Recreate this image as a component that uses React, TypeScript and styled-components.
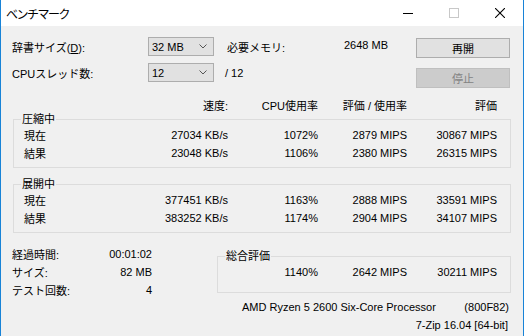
import React from "react";
import styled, { createGlobalStyle } from "styled-components";

const GlobalStyle = createGlobalStyle`
    html, body {
        margin: 0;
        padding: 0;
        background: #f0f0f0;
    }
    body {
        font-family: "Liberation Sans", "Noto Sans CJK JP", sans-serif;
        font-size: 11px;
        color: #000;
    }
`

const Window = styled.div`
    width: 524px;
    height: 336px;
    box-sizing: border-box;
    border-left: 1px solid #1883d7;
    border-right: 1px solid #1883d7;
    background: #f0f0f0;
    overflow: hidden;
    display: flex;
    flex-direction: column;
`

const TitleBar = styled.div`
    height: 26px;
    flex: none;
    background: #fff;
    display: flex;
    align-items: center;
`

const Title = styled.span`
    flex: 1;
    padding-left: 5px;
    font-family: "Noto Sans CJK JP", sans-serif;
    font-size: 12px;
    letter-spacing: -1.5px;
`

const TitleButton = styled.div<{ $disabled?: boolean }>`
    width: 46px;
    height: 26px;
    display: flex;
    align-items: center;
    justify-content: center;
    color: ${({ $disabled }) => $disabled ? "#c8c8c8" : "#000"};
`

const Body = styled.div`
    flex: 1;
    padding: 11px 12px 0 11px;
    display: flex;
    flex-direction: column;
`

const TopSection = styled.div`
    display: flex;
    align-items: flex-start;
`

const SettingsGrid = styled.div`
    display: grid;
    grid-template-columns: 136px 66px 174px;
    grid-auto-rows: 19px;
    row-gap: 7px;
    align-items: center;
`

const Select = styled.div`
    height: 19px;
    box-sizing: border-box;
    border: 1px solid #adadad;
    background: #e1e1e1;
    padding: 0 6px 0 3px;
    display: flex;
    align-items: center;
    justify-content: space-between;
`

const InfoCell = styled.div<{ $indent: number }>`
    padding-left: ${({ $indent }) => $indent}px;
    display: flex;
    justify-content: space-between;
`

const ButtonColumn = styled.div`
    width: 94px;
    margin: 1px 0 0 28px;
    display: flex;
    flex-direction: column;
    gap: 10px;
`

const Button = styled.div<{ disabled?: boolean }>`
    height: 20px;
    box-sizing: border-box;
    border: 1px solid ${({ disabled }) => disabled ? "#bfbfbf" : "#adadad"};
    background: ${({ disabled }) => disabled ? "#cccccc" : "#e1e1e1"};
    color: ${({ disabled }) => disabled ? "#838383" : "#000"};
    display: flex;
    align-items: center;
    justify-content: center;
`

const HeaderRow = styled.div`
    margin-top: 9px;
    height: 14px;
    padding-right: 14px;
    display: grid;
    grid-template-columns: 1fr 90px 89px 90px;
    align-items: center;
    text-align: right;
`

const Group = styled.fieldset<{ $bottom: number }>`
    margin: 0 0 0 1px;
    padding: 0 0 ${({ $bottom }) => $bottom}px 0;
    border: 1px solid #dcdcdc;
    min-width: 0;
`

const Legend = styled.legend`
    margin-left: 7px;
    padding: 0 1px;
    line-height: 14px;
    height: 14px;
`

const TableRow = styled.div`
    height: 18px;
    padding: 0 13px 0 10px;
    display: grid;
    grid-template-columns: auto 1fr 90px 89px 90px;
    align-items: center;
    text-align: right;
`

const RowLabel = styled.span`
    text-align: left;
`

const Spacer = styled.div<{ $h: number }>`
    height: ${({ $h }) => $h}px;
    flex: none;
`

const BottomSection = styled.div`
    display: flex;
    align-items: flex-start;
`

const StatsGrid = styled.div`
    width: 141px;
    display: grid;
    grid-template-columns: 1fr auto;
    grid-auto-rows: 18px;
    align-items: center;
`

const StatValue = styled.span`
    justify-self: end;
`

const SummaryWrap = styled.div`
    flex: 1;
    margin: 4px 0 0 64px;
    display: flex;
    flex-direction: column;
`

const CpuLine = styled.div`
    margin-top: 1px;
    height: 14px;
    padding: 0 2px 0 230px;
    display: flex;
    align-items: center;
    justify-content: space-between;
`

const VersionLine = styled.div`
    margin-top: 5px;
    height: 14px;
    padding-right: 3px;
    text-align: right;
`

const Chevron = () => (
    <svg width="8" height="5" viewBox="0 0 8 5">
        <polyline points="0.5,0.5 4,4 7.5,0.5" fill="none" stroke="#555" strokeWidth="1" />
    </svg>
)

const rows = {
    compress: [
        ["現在", "27034 KB/s", "1072%", "2879 MIPS", "30867 MIPS"],
        ["結果", "23048 KB/s", "1106%", "2380 MIPS", "26315 MIPS"],
    ],
    decompress: [
        ["現在", "377451 KB/s", "1163%", "2888 MIPS", "33591 MIPS"],
        ["結果", "383252 KB/s", "1174%", "2904 MIPS", "34107 MIPS"],
    ],
}

const stats = [
    ["経過時間:", "00:01:02"],
    ["サイズ:", "82 MB"],
    ["テスト回数:", "4"],
]

const ResultGroup = ({ title, data }: { title: string, data: string[][] }) => (
    <Group $bottom={5}>
        <Legend>{title}</Legend>
        {data.map(row => (
            <TableRow key={row[0]}>
                <RowLabel>{row[0]}</RowLabel>
                {row.slice(1).map((v, i) => <span key={i}>{v}</span>)}
            </TableRow>
        ))}
    </Group>
)

const App = () => {
    return (
        <Window>
            <GlobalStyle />
            <TitleBar>
                <Title>ベンチマーク</Title>
                <TitleButton>
                    <svg width="10" height="10" viewBox="0 0 10 10">
                        <line x1="0" y1="5.5" x2="10" y2="5.5" stroke="currentColor" />
                    </svg>
                </TitleButton>
                <TitleButton $disabled>
                    <svg width="10" height="10" viewBox="0 0 10 10">
                        <rect x="0.5" y="0.5" width="9" height="9" fill="none" stroke="currentColor" />
                    </svg>
                </TitleButton>
                <TitleButton>
                    <svg width="10" height="10" viewBox="0 0 10 10">
                        <path d="M0 0 L10 10 M10 0 L0 10" stroke="currentColor" strokeWidth="1.1" />
                    </svg>
                </TitleButton>
            </TitleBar>
            <Body>
                <TopSection>
                    <SettingsGrid>
                        <span>辞書サイズ(<u>D</u>):</span>
                        <Select>
                            <span>32 MB</span>
                            <Chevron />
                        </Select>
                        <InfoCell $indent={13}>
                            <span>必要メモリ:</span>
                            <span>2648 MB</span>
                        </InfoCell>
                        <span>CPUスレッド数:</span>
                        <Select>
                            <span>12</span>
                            <Chevron />
                        </Select>
                        <InfoCell $indent={11}>
                            <span>/ 12</span>
                        </InfoCell>
                    </SettingsGrid>
                    <ButtonColumn>
                        <Button>再開</Button>
                        <Button disabled>停止</Button>
                    </ButtonColumn>
                </TopSection>
                <HeaderRow>
                    <span>速度:</span>
                    <span>CPU使用率</span>
                    <span>評価 / 使用率</span>
                    <span>評価</span>
                </HeaderRow>
                <Spacer $h={1} />
                <ResultGroup title="圧縮中" data={rows.compress} />
                <Spacer $h={9} />
                <ResultGroup title="展開中" data={rows.decompress} />
                <Spacer $h={12} />
                <BottomSection>
                    <StatsGrid>
                        {stats.map(([label, value]) => (
                            <React.Fragment key={label}>
                                <span>{label}</span>
                                <StatValue>{value}</StatValue>
                            </React.Fragment>
                        ))}
                    </StatsGrid>
                    <SummaryWrap>
                        <Group $bottom={11}>
                            <Legend>総合評価</Legend>
                            <TableRow>
                                <RowLabel />
                                <span />
                                <span>1140%</span>
                                <span>2642 MIPS</span>
                                <span>30211 MIPS</span>
                            </TableRow>
                        </Group>
                    </SummaryWrap>
                </BottomSection>
                <CpuLine>
                    <span>AMD Ryzen 5 2600 Six-Core Processor</span>
                    <span>(800F82)</span>
                </CpuLine>
                <VersionLine>7-Zip 16.04 [64-bit]</VersionLine>
            </Body>
        </Window>
    )
}

export default App
